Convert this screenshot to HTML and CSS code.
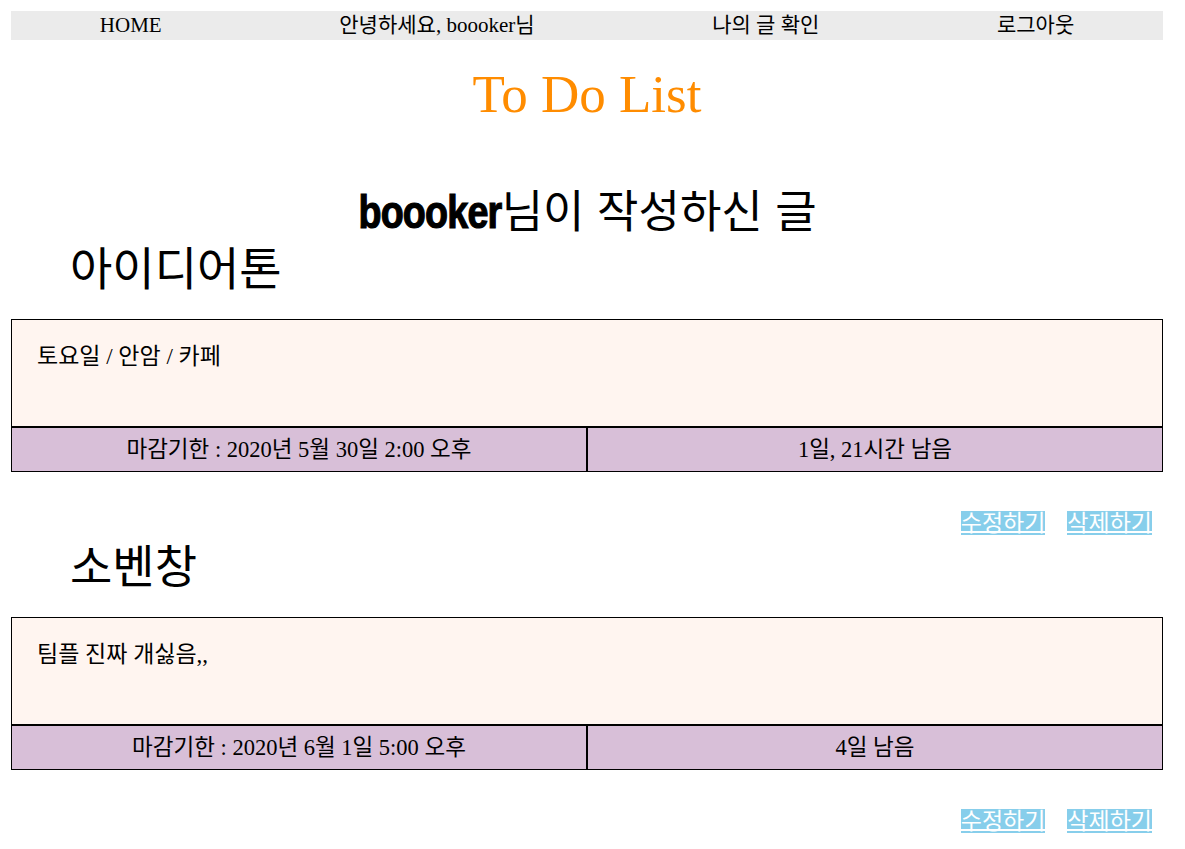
FILE: index.html
```html
<!DOCTYPE html>
<html lang="ko">
<head>
<meta charset="utf-8">
<title>To Do List</title>
<link rel="stylesheet" href="styles.css">
</head>
<body>
<nav class="nav">
  <a class="nav-item" href="#">HOME</a>
  <span class="nav-item">안녕하세요, boooker님</span>
  <a class="nav-item" href="#">나의 글 확인</a>
  <a class="nav-item" href="#">로그아웃</a>
</nav>
<h1 class="title">To Do List</h1>
<h2 class="owner"><span class="owner-name">boooker</span>님이 작성하신 글</h2>

<section class="post">
  <h3 class="post-title">아이디어톤</h3>
  <div class="card">
    <div class="card-body">토요일 / 안암 / 카페</div>
    <div class="card-foot">
      <div class="cell">마감기한 : 2020년 5월 30일 2:00 오후</div>
      <div class="cell">1일, 21시간 남음</div>
    </div>
  </div>
  <div class="actions">
    <a class="btn" href="#">수정하기</a>
    <a class="btn" href="#">삭제하기</a>
  </div>
</section>

<section class="post">
  <h3 class="post-title">소벤창</h3>
  <div class="card">
    <div class="card-body">팀플 진짜 개싫음,,</div>
    <div class="card-foot">
      <div class="cell">마감기한 : 2020년 6월 1일 5:00 오후</div>
      <div class="cell">4일 남음</div>
    </div>
  </div>
  <div class="actions">
    <a class="btn" href="#">수정하기</a>
    <a class="btn" href="#">삭제하기</a>
  </div>
</section>
</body>
</html>
```

FILE: styles.css
```css
html, body {
  background: #ffffff;
}
body {
  margin: 11px 22px 0 11px;
  font-family: "Liberation Serif", "Noto Sans CJK KR", serif;
  color: #000;
}
.nav {
  display: flex;
  height: 29px;
  background: #ebebeb;
}
.nav-item {
  flex: 1 1 auto;
  text-align: center;
  font-size: 21px;
  line-height: 29px;
  color: #000;
  text-decoration: none;
}
.title {
  margin: 24px 0 0;
  font-size: 53px;
  line-height: 60px;
  font-weight: normal;
  color: #ff8c00;
  text-align: center;
}
.owner {
  margin: 0;
  height: 113px;
  box-sizing: border-box;
  padding-top: 60px;
  font-family: "Noto Sans CJK KR", sans-serif;
  font-size: 45px;
  line-height: 50px;
  font-weight: normal;
  text-align: center;
}
.owner-name {
  display: inline-block;
  font-family: "Liberation Sans", sans-serif;
  font-weight: bold;
  font-size: 46px;
  letter-spacing: -1px;
  -webkit-text-stroke: 1.2px #000;
  transform: scaleX(0.82);
  transform-origin: right center;
  margin-left: -30px;
}
.post-title {
  margin: 0;
  height: 82px;
  padding-left: 59px;
  font-family: "Noto Sans CJK KR", sans-serif;
  font-size: 46px;
  line-height: 56px;
  font-weight: normal;
}
.card-body {
  height: 108px;
  box-sizing: border-box;
  padding: 25px 25px;
  border: 1px solid #000;
  background: #fff5f0;
  font-size: 23px;
  line-height: 24px;
}
.card-foot {
  display: flex;
}
.cell {
  flex: 1 1 0;
  height: 45px;
  box-sizing: border-box;
  border: 1px solid #000;
  background: #d8bfd8;
  text-align: center;
  font-size: 22.5px;
  line-height: 43px;
}
.actions {
  display: flex;
  justify-content: flex-end;
  margin-top: 39px;
}
.btn {
  display: block;
  margin: 0 11px;
  padding-bottom: 2px;
  border-bottom: 2px solid #87ceeb;
  background: #87ceeb;
  background-clip: content-box;
  color: #ffffff;
  text-decoration: none;
  font-family: "Noto Sans CJK KR", sans-serif;
  font-size: 23px;
  line-height: 20px;
  height: 20px;
}
```
